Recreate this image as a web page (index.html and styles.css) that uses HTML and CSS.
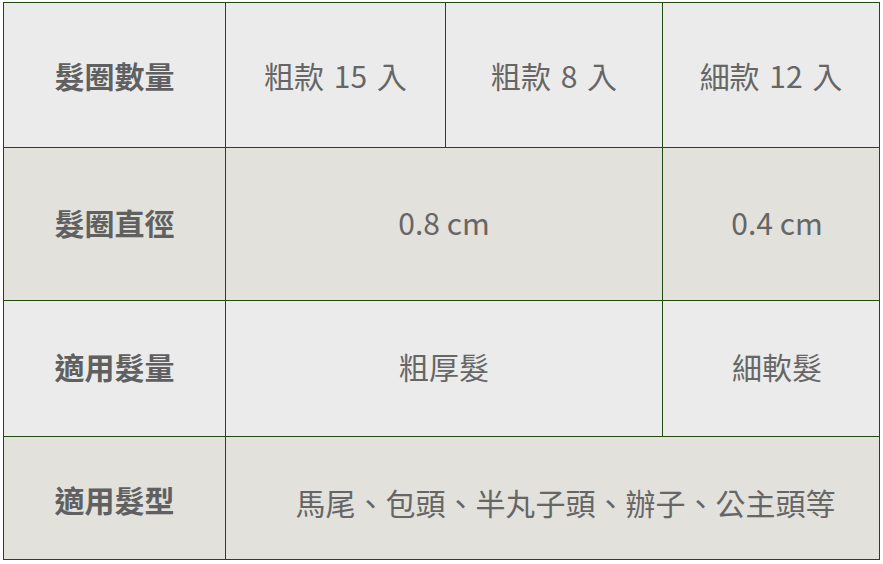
FILE: index.html
```html
<!DOCTYPE html>
<html lang="zh-Hant">
<head>
<meta charset="utf-8">
<title>髮圈規格</title>
<link rel="stylesheet" href="styles.css">
</head>
<body>
<table class="spec">
  <colgroup>
    <col class="c1"><col class="c2"><col class="c3"><col class="c4">
  </colgroup>
  <tr class="r1 light">
    <th>髮圈數量</th>
    <td>粗款 15 入</td>
    <td>粗款 8 入</td>
    <td>細款 12 入</td>
  </tr>
  <tr class="r2 dark">
    <th>髮圈直徑</th>
    <td colspan="2">0.8 cm</td>
    <td class="shift">0.4 cm</td>
  </tr>
  <tr class="r3 light">
    <th>適用髮量</th>
    <td colspan="2">粗厚髮</td>
    <td class="shift">細軟髮</td>
  </tr>
  <tr class="r4 dark">
    <th>適用髮型</th>
    <td colspan="3" class="shift-wide">馬尾、包頭、半丸子頭、辦子、公主頭等</td>
  </tr>
</table>
</body>
</html>
```

FILE: styles.css
```css
html, body {
  margin: 0;
  padding: 0;
  background: #ffffff;
}

.spec {
  margin: 2px 0 0 3px;
  border-collapse: collapse;
  table-layout: fixed;
  width: 876px;
  font-family: "Noto Sans CJK TC", "Noto Sans", sans-serif;
  font-size: 30px;
  color: #666666;
}

.c1 { width: 222px; }
.c2 { width: 220px; }
.c3 { width: 217px; }
.c4 { width: 217px; }

.spec th,
.spec td {
  border: 1px solid #224a0e;
  text-align: center;
  vertical-align: middle;
  padding: 0;
  font-weight: 400;
  line-height: 1.3;
}

.spec th {
  font-weight: 700;
  color: #606060;
}

.light { background: #ebebeb; }
.dark { background: #e2e1dc; }

.r1 { height: 145px; }
.r2 { height: 153px; }
.r3 { height: 136px; }
.r4 { height: 123px; }

.r1 td { word-spacing: 3px; }

.r2 th, .r2 td,
.r3 th, .r3 td { padding-bottom: 4px; }

.r4 th { padding-top: 2px; }
.r4 td { padding-top: 8px; }

.spec .shift { padding-left: 12px; }
.spec .shift-wide { padding-left: 26px; }
```
